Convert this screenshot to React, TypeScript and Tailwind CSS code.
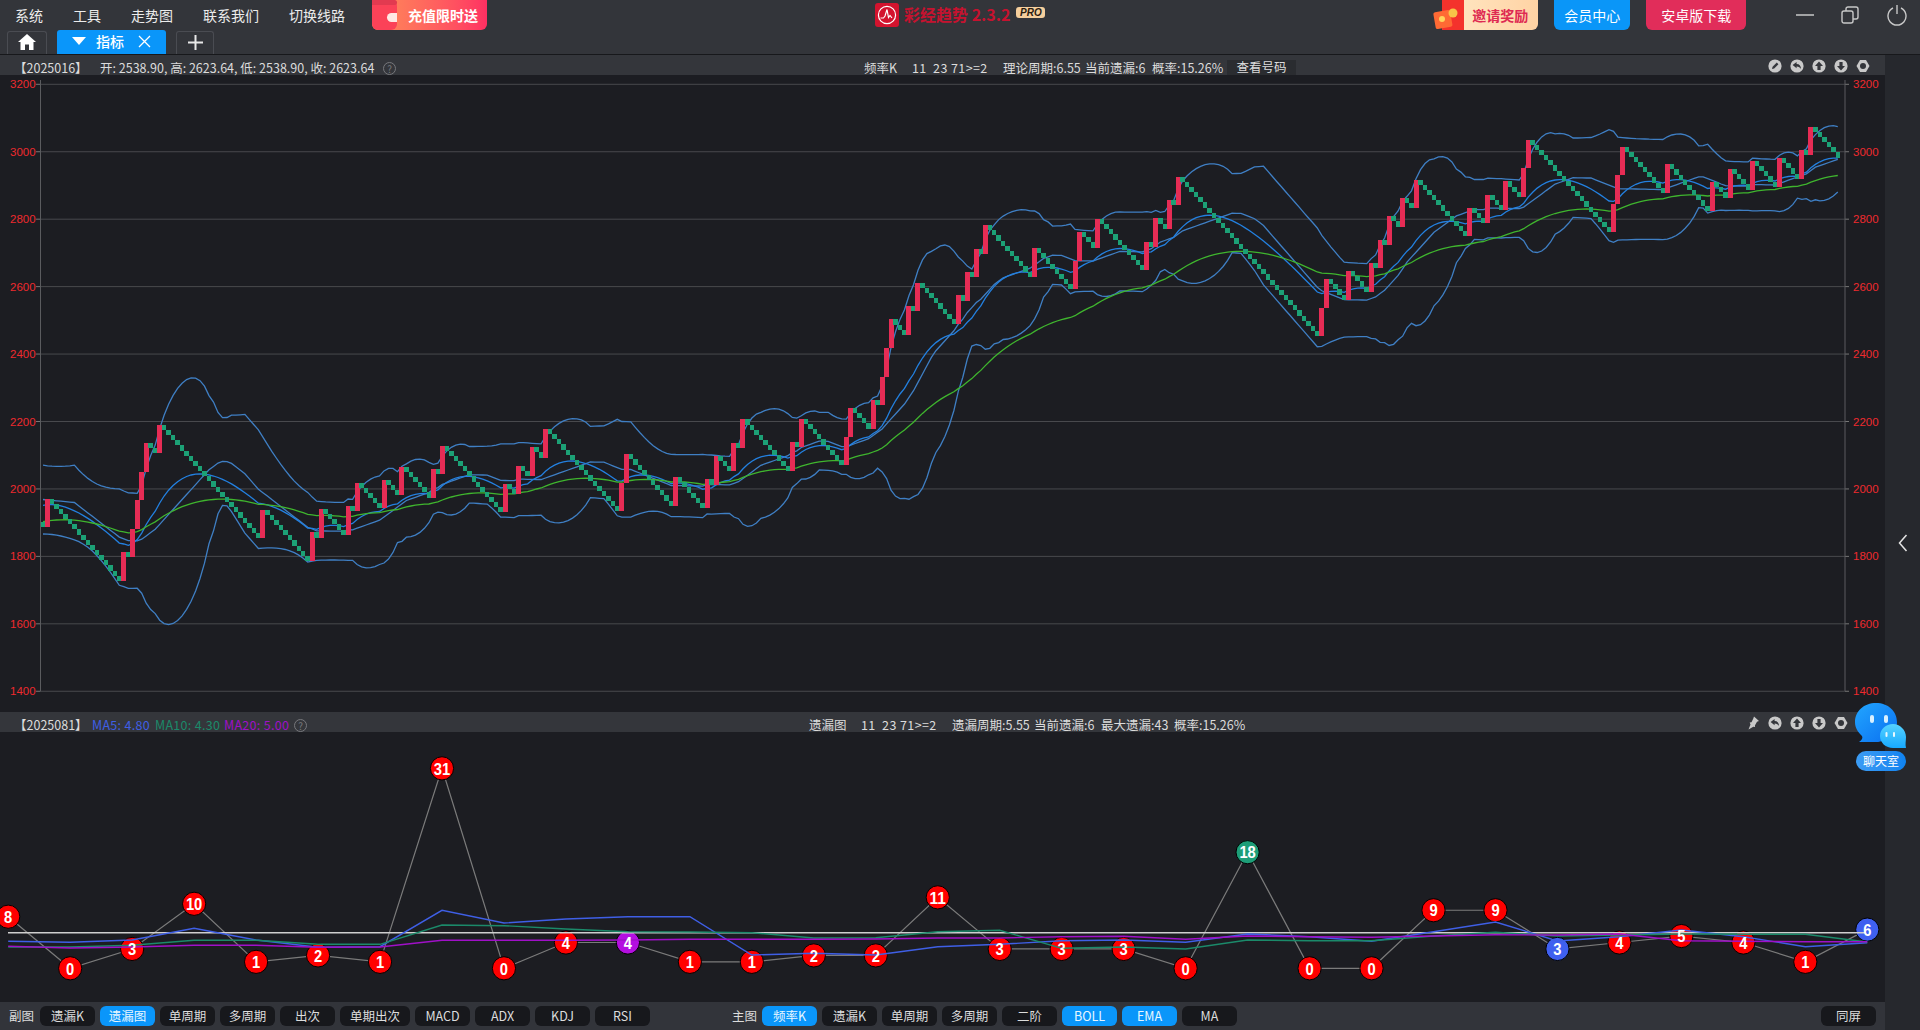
import React from "react";

const HITS = [1,18,20,21,22,23,26,49,60,62,68,70,76,80,87,89,103,106,109,112,129,130,141,148,150,154,156,167,169,179,180,185,187,188,189,193,195,204,206,208,210,221,230,231,235,246,248,251,253,285,286,291,296,298,300,303,306,318,322,326,330,331,350,351,352,362,372,376,381,387,392,394];
const hitSet = new Set(HITS);
const N = 401;
const Y = (v: number) => 84.3 + (3200 - v) * 0.3372;
const X = (i: number) => 43 + i * 4.487;
const closes: number[] = [];
const opens: number[] = [];
{
  let v = 1902;
  for (let i = 0; i < N; i++) {
    opens.push(v);
    v += hitSet.has(i) ? 84.74 : -15.26;
    closes.push(v);
  }
}
// values just before the visible window, i = -1, -2, ... -20
const BEFORE = [1902,1917,1932,1948,1963,1978,1993,2009,2024,2039,2054,2070,1905,1920,1936,1951,1966,1981,1997,2012];
const hist = (i: number) => (i < 0 ? BEFORE[-i - 1] : closes[i]);
function ma(n: number, i: number) {
  let s = 0;
  for (let k = 0; k < n; k++) s += hist(i - k);
  return s / n;
}
function sd(n: number, i: number) {
  const m = ma(n, i);
  let s = 0;
  for (let k = 0; k < n; k++) s += (hist(i - k) - m) ** 2;
  return Math.sqrt(s / n);
}
function line(f: (i: number) => number) {
  return Array.from({ length: N }, (_, i) => `${X(i).toFixed(1)},${Y(f(i)).toFixed(1)}`).join(" ");
}
const ema = (n: number, start: number) => {
  const a = 2 / (n + 1);
  const out: number[] = [];
  let e = start;
  for (let i = 0; i < N; i++) {
    e = e + a * (closes[i] - e);
    out.push(e);
  }
  return out;
};
const e1 = ema(20, 1958);
const e2 = ema(60, 1903.5);

const GRID = [3200, 3000, 2800, 2600, 2400, 2200, 2000, 1800, 1600, 1400];

function MainChart() {
  return (
    <svg viewBox="0 75 1885 637" className="block h-[637px] w-full" fontFamily="'Liberation Sans', sans-serif">
      {GRID.map((g) => (
        <g key={g}>
          <line x1={40.5} x2={1845} y1={Y(g)} y2={Y(g)} stroke="#48494d" strokeWidth={1} />
          <line x1={36} x2={40.5} y1={Y(g)} y2={Y(g)} stroke="#777" strokeWidth={1} />
          <line x1={1845} x2={1849} y1={Y(g)} y2={Y(g)} stroke="#777" strokeWidth={1} />
          <text x={10} y={Y(g) + 4} fontSize={11.5} fill="#ee2a2e">{g}</text>
          <text x={1853} y={Y(g) + 4} fontSize={11.5} fill="#ee2a2e">{g}</text>
        </g>
      ))}
      <line x1={40.5} x2={40.5} y1={80} y2={691} stroke="#5a5b5e" />
      <line x1={1845} x2={1845} y1={80} y2={691} stroke="#5a5b5e" />
      <polyline points={line((i) => ma(20, i) + 2 * sd(20, i))} fill="none" stroke="#3f7fc4" strokeWidth={1.3} />
      <polyline points={line((i) => ma(20, i) - 2 * sd(20, i))} fill="none" stroke="#3f7fc4" strokeWidth={1.3} />
      <polyline points={line((i) => ma(20, i))} fill="none" stroke="#3f7fc4" strokeWidth={1.3} />
      <polyline points={line((i) => e1[i])} fill="none" stroke="#2380e0" strokeWidth={1.3} />
      <polyline points={line((i) => e2[i])} fill="none" stroke="#3fb52e" strokeWidth={1.3} />
      {closes.map((c, i) => {
        const up = c > opens[i];
        const top = Y(Math.max(c, opens[i]));
        const h = Math.abs(Y(c) - Y(opens[i]));
        const half = up ? 2.5 : 2.245;
        const left = Math.round(X(i) - half);
        const right = Math.round(X(i) + half);
        return (
          <rect key={i} x={left} y={top} width={right - left} height={h} fill={up ? "#e62c55" : "#1ca176"} shapeRendering="crispEdges" />
        );
      })}
    </svg>
  );
}

const SUB = [8,0,3,10,1,2,1,31,0,4,4,1,1,2,2,11,3,3,3,0,18,0,0,9,9,3,4,5,4,1,6];
const SX = (i: number) => 8.2 + i * 61.97;
const SY = (v: number) => 968.3 - 6.45 * v;
const MA5 = [941.3,942.3,940,928.3,940,947.3,946.7,910.3,923,919,916.7,916.7,955,953.3,955,946.7,944.3,940.7,940,942.3,934,936.7,941.3,931.7,922,941,936.7,930,936.7,946.7,942.7];
const MA10 = [947,947,945.3,940.3,940.3,944.3,944.3,925,925.7,929,931.7,932,932.7,938,937.7,931.7,930.3,948.3,947,949,940,940.7,940.7,936,932.3,936,935,934,934.3,934.3,942];
const MA20 = [946.3,948,947,945.3,945.3,947.3,947,940.3,940.3,940.3,940,939.3,939.3,939.3,939,938,938,936.7,936.3,939.3,936,936.7,937.3,936,934.7,935,934,940.7,941.3,941.7,941.7];
const pts = (a: number[]) => a.map((y, i) => `${SX(i).toFixed(1)},${y}`).join(" ");
const nodeColor = (i: number) => (i === 20 ? "#1d9e78" : i === 10 ? "#b40fe0" : i === 25 || i === 30 ? "#3f60f0" : "#ff0000");

function SubChart() {
  return (
    <svg viewBox="0 732 1885 270" className="block h-[270px] w-full" fontFamily="'Liberation Sans', sans-serif">
      <polyline points={SUB.map((v, i) => `${SX(i).toFixed(1)},${SY(v)}`).join(" ")} fill="none" stroke="#7b7b7b" strokeWidth={1.2} />
      {SUB.map((v, i) => (
        <circle key={i} cx={SX(i)} cy={SY(v)} r={11.6} fill={nodeColor(i)} stroke="#000" strokeWidth={1} />
      ))}
      <line x1={8} x2={1865} y1={932.7} y2={932.7} stroke="#cfcfcf" strokeWidth={1.5} />
      <polyline points={pts(MA5)} fill="none" stroke="#3f5fe6" strokeWidth={1.4} />
      <polyline points={pts(MA10)} fill="none" stroke="#1b8a6a" strokeWidth={1.4} />
      <polyline points={pts(MA20)} fill="none" stroke="#a010c8" strokeWidth={1.4} />
      {SUB.map((v, i) => (
        <text key={i} x={SX(i)} y={SY(v) + 6.2} textAnchor="middle" fontSize={17} fontWeight={700} fill="#fff" textLength={String(v).length * 8.2} lengthAdjust="spacingAndGlyphs">{v}</text>
      ))}
    </svg>
  );
}

function ToolIcon({ kind }: { kind: "edit" | "back" | "up" | "down" | "gear" | "pin" }) {
  const c = "#c9c9c9";
  const d = "#34363b";
  if (kind === "pin")
    return (
      <svg width="14" height="14" viewBox="0 0 13 14">
        <path d="M7.5 0.5 L12.5 5 L10.5 5.8 L8.4 9.6 L8.6 11 L6.8 10.8 L2 13.5 L4 8.5 L3.2 6.4 L5 6.2 L6.8 2.6 Z" fill={c} />
      </svg>
    );
  if (kind === "gear")
    return (
      <svg width="14" height="14" viewBox="0 0 14 14">
        <path d="M4 1 H10 L13.5 7 L10 13 H4 L0.5 7 Z" fill={c} />
        <circle cx="7" cy="7" r="3" fill={d} />
      </svg>
    );
  return (
    <svg width="14" height="14" viewBox="0 0 14 14">
      <circle cx="7" cy="7" r="6.6" fill={c} />
      {kind === "edit" && <path d="M4 10 L4.6 7.8 L8.8 3.6 L10.4 5.2 L6.2 9.4 Z" fill={d} />}
      {kind === "back" && <path d="M2.6 6 L6.6 3 V5 C9.6 5 11 7 11 10 C10 8.2 8.8 7.4 6.6 7.4 V9.2 Z" fill={d} />}
      {kind === "up" && <path d="M7 2.6 L11 7 H8.6 V11 H5.4 V7 H3 Z" fill={d} />}
      {kind === "down" && <path d="M7 11.4 L3 7 H5.4 V3 H8.6 V7 H11 Z" fill={d} />}
    </svg>
  );
}

function Btn({ children, active, w = "w-[55px]" }: { children: React.ReactNode; active?: boolean; w?: string }) {
  return (
    <div className={`flex h-5 items-center justify-center rounded-md text-[12.5px] leading-none ${w} ${active ? "bg-[#0a96fa] text-[#e8f6ff]" : "bg-[#17181c] text-[#dcdcdc]"}`}>
      {children}
    </div>
  );
}

function Help() {
  return <span className="flex h-[13px] w-[13px] shrink-0 items-center justify-center rounded-full border border-[#77787c] text-[10px] text-[#77787c]">?</span>;
}

const FONT = "'Noto Sans CJK SC', 'Liberation Sans', sans-serif";

export default function App() {
  return (
    <div className="relative flex h-[1030px] w-[1920px] flex-col overflow-hidden bg-[#1c1d22] text-white" style={{ fontFamily: FONT }}>
      {/* Header */}
      <header className="h-[55px] shrink-0 border-b border-[#17181b] bg-[#33353a]">
        <div className="flex h-[30px] items-start">
          <nav className="flex h-[30px] items-center text-[14px] text-[#ececec]">
            <span className="ml-[15px]">系统</span>
            <span className="ml-[30px]">工具</span>
            <span className="ml-[30px]">走势图</span>
            <span className="ml-[30px]">联系我们</span>
            <span className="ml-[30px]">切换线路</span>
          </nav>
          <div className="ml-[27px] flex h-[30px] w-[115px] items-center overflow-hidden rounded-b-md bg-gradient-to-r from-[#ff8a58] to-[#ff2f62]">
            <div className="relative h-full w-[25px] rounded-r-md bg-[#fb4258]">
              <div className="absolute inset-x-0 top-0 h-[5px] rounded-r-md bg-[#e23a50]" />
              <div className="absolute right-0 top-[13px] h-[9px] w-[10px] rounded-l-full bg-[#ffe9e4]" />
            </div>
            <span className="ml-[11px] text-[14px] font-bold text-white">充值限时送</span>
          </div>
          <div className="ml-[388px] flex h-[30px] items-start">
            <div className="mt-[3px] flex h-6 w-6 items-center justify-center rounded-[3px] bg-[#d3132e]">
              <svg width="20" height="20" viewBox="0 0 20 20" fill="none" stroke="#fff" strokeWidth="1.2">
                <circle cx="10" cy="10" r="8.6" />
                <path d="M3.5 13 L6.5 13 L8 11 L10 4.5 L11.5 12.5 L13 10.5 L15 13" />
              </svg>
            </div>
            <span className="ml-[5px] mt-[2px] text-[16px] font-bold leading-[24px] text-[#c6122f]">彩经趋势 2.3.2</span>
            <span className="ml-[6px] mt-[7px] flex h-[11px] w-[29px] items-center justify-center rounded-[3px] bg-[#f6cf9d] text-[10px] font-bold italic leading-none text-[#2b1c10]" style={{ fontFamily: "'Liberation Sans', sans-serif" }}>PRO</span>
          </div>
          <div className="ml-[388px] flex h-[30px] w-[105px] items-stretch">
            <svg width="31" height="30" viewBox="0 0 31 30" className="shrink-0">
              <path d="M9 0 H31 V30 H9 Z" fill="#f4322c" />
              <rect x="1.5" y="11" width="17" height="17" rx="2" transform="rotate(-10 10 20)" fill="#ff6a34" />
              <circle cx="20" cy="13" r="4.5" fill="#f7c548" />
              <circle cx="9" cy="19" r="3" fill="#ffd55c" />
            </svg>
            <div className="flex flex-1 items-center rounded-br-md bg-gradient-to-r from-[#ffe3bd] to-[#ffd3a4]">
              <span className="ml-[8px] text-[14px] font-bold text-[#de2a52]">邀请奖励</span>
            </div>
          </div>
          <div className="ml-[16px] flex h-[30px] w-[76px] items-center justify-center rounded-b-md bg-[#0a96f8] text-[14px] text-white">会员中心</div>
          <div className="ml-[16px] flex h-[30px] w-[100px] items-center justify-center rounded-b-md bg-[#e12d5a] text-[14px] text-white">安卓版下载</div>
          <svg width="18" height="30" viewBox="0 0 18 30" className="ml-[50px]"><line x1="0" x2="18" y1="15" y2="15" stroke="#c8c8c8" strokeWidth="1.5" /></svg>
          <svg width="18" height="18" viewBox="0 0 18 18" fill="none" stroke="#c8c8c8" strokeWidth="1.4" className="ml-[27px] mt-[6px]">
            <rect x="1" y="5" width="11" height="12" rx="2" />
            <path d="M5 5 V3 a2 2 0 0 1 2-2 H15 a2 2 0 0 1 2 2 V11 a2 2 0 0 1-2 2 H12" />
          </svg>
          <svg width="20" height="22" viewBox="0 0 20 22" fill="none" stroke="#c8c8c8" strokeWidth="1.4" className="ml-[28px] mt-[4px]">
            <path d="M6 4 A9 9 0 1 0 14 4" />
            <line x1="10" x2="10" y1="1" y2="10" />
          </svg>
        </div>
        <div className="flex h-[24px] items-end">
          <div className="ml-[7px] flex h-[23px] w-[40px] items-center justify-center rounded-t-[3px] border border-b-0 border-[#4a4c52] pb-[2px]">
            <svg width="18" height="16" viewBox="0 0 18 16" fill="#fff"><path d="M9 0 L18 8 H15.5 V16 H11 V10.5 H7 V16 H2.5 V8 H0 Z" /></svg>
          </div>
          <div className="ml-[10px] flex h-[24px] w-[109px] items-center rounded-t-[3px] bg-[#0a96fa] pb-[2px] text-[14px] text-white">
            <svg width="14" height="8" viewBox="0 0 14 8" className="ml-[15px]" fill="#fff"><path d="M0 0 H14 L7 8 Z" /></svg>
            <span className="ml-[10px] font-medium">指标</span>
            <svg width="13" height="13" viewBox="0 0 13 13" className="ml-[14px]" stroke="#fff" strokeWidth="1.3"><path d="M1 1 L12 12 M12 1 L1 12" /></svg>
          </div>
          <div className="ml-[10px] flex h-[23px] w-[38px] items-center justify-center rounded-t-[3px] border border-b-0 border-[#4a4c52] pb-[2px]">
            <svg width="15" height="15" viewBox="0 0 15 15" stroke="#e8e8e8" strokeWidth="2"><path d="M7.5 0 V15 M0 7.5 H15" /></svg>
          </div>
        </div>
      </header>

      <div className="flex min-h-0 flex-1">
        <main className="flex w-[1885px] shrink-0 flex-col">
          <div className="relative flex h-5 shrink-0 items-center bg-[#34363b] pl-[14px] pt-[7px] text-[12.5px] leading-none text-[#dcdcdc]">
            <span className="w-[86px] whitespace-pre">【2025016】</span>
            <span className="w-[283px] whitespace-pre">开: 2538.90, 高: 2623.64, 低: 2538.90, 收: 2623.64</span>
            <Help />
            <span className="ml-[468px] w-[48px] whitespace-pre">频率K</span>
            <span className="w-[91px] whitespace-pre tracking-[0.4px]">11  23 71&gt;=2</span>
            <span className="w-[82px] whitespace-pre">理论周期:6.55</span>
            <span className="w-[67px] whitespace-pre">当前遗漏:6</span>
            <span className="w-[75px] whitespace-pre">概率:15.26%</span>
            <span className="flex h-[15px] w-[69px] items-center justify-center self-end bg-[#2a2c30] text-[12.5px]">查看号码</span>
            <div className="absolute left-[1768px] top-[4px] flex gap-[8px]">
              <ToolIcon kind="edit" />
              <ToolIcon kind="back" />
              <ToolIcon kind="up" />
              <ToolIcon kind="down" />
              <ToolIcon kind="gear" />
            </div>
          </div>
          <MainChart />
          <div className="relative flex h-5 shrink-0 items-center bg-[#34363b] pl-[14px] pt-[7px] text-[12.5px] leading-none text-[#dcdcdc]">
            <span className="w-[78px] whitespace-pre">【2025081】</span>
            <span className="w-[63px] whitespace-pre tracking-[0.3px] text-[#3f5fe6]">MA5: 4.80</span>
            <span className="w-[69px] whitespace-pre tracking-[0.3px] text-[#1b8a6a]">MA10: 4.30</span>
            <span className="w-[70px] whitespace-pre tracking-[0.3px] text-[#a010c8]">MA20: 5.00</span>
            <Help />
            <span className="ml-[502px] w-[52px] whitespace-pre">遗漏图</span>
            <span className="w-[91px] whitespace-pre tracking-[0.4px]">11  23 71&gt;=2</span>
            <span className="w-[82px] whitespace-pre">遗漏周期:5.55</span>
            <span className="w-[67px] whitespace-pre">当前遗漏:6</span>
            <span className="w-[73px] whitespace-pre">最大遗漏:43</span>
            <span className="whitespace-pre">概率:15.26%</span>
            <div className="absolute left-[1746px] top-[4px] flex gap-[8px]">
              <ToolIcon kind="pin" />
              <ToolIcon kind="back" />
              <ToolIcon kind="up" />
              <ToolIcon kind="down" />
              <ToolIcon kind="gear" />
            </div>
          </div>
          <SubChart />
          <div className="flex h-[28px] shrink-0 items-center bg-[#32343a] text-[12.5px] text-[#dcdcdc]">
            <span className="ml-[9px] w-[31px]">副图</span>
            <div className="flex gap-[5px]">
              <Btn>遗漏K</Btn>
              <Btn active>遗漏图</Btn>
              <Btn>单周期</Btn>
              <Btn>多周期</Btn>
              <Btn>出次</Btn>
              <Btn w="w-[70px]">单期出次</Btn>
              <Btn>MACD</Btn>
              <Btn>ADX</Btn>
              <Btn>KDJ</Btn>
              <Btn>RSI</Btn>
            </div>
            <span className="ml-[82px] w-[30px]">主图</span>
            <div className="flex gap-[5px]">
              <Btn active>频率K</Btn>
              <Btn>遗漏K</Btn>
              <Btn>单周期</Btn>
              <Btn>多周期</Btn>
              <Btn>二阶</Btn>
              <Btn active>BOLL</Btn>
              <Btn active>EMA</Btn>
              <Btn>MA</Btn>
            </div>
            <div className="ml-auto mr-[9px]">
              <Btn>同屏</Btn>
            </div>
          </div>
        </main>
        <aside className="flex flex-1 items-center justify-center bg-[#26282d]">
          <svg width="10" height="18" viewBox="0 0 10 18" fill="none" stroke="#e4e4e4" strokeWidth="1.5"><path d="M8.5 1 L1.5 9 L8.5 17" /></svg>
        </aside>
      </div>

      {/* Chat floating widget */}
      <div className="absolute left-[1855px] top-[703px] flex w-[52px] flex-col items-center">
        <svg width="52" height="46" viewBox="0 0 52 46">
          <defs>
            <linearGradient id="a" x1="0" x2="1" y1="0" y2="1"><stop offset="0" stopColor="#22a6ff" /><stop offset="1" stopColor="#0a6ff0" /></linearGradient>
            <linearGradient id="b" x1="0" x2="0" y1="0" y2="1"><stop offset="0" stopColor="#56d2ff" /><stop offset="1" stopColor="#18aaff" /></linearGradient>
          </defs>
          <path d="M21 0 C33 0 42 8 42 19 C42 30 33 39 21 39 H4 C7 37 8 35 7 33 C3 29 0 25 0 19 C0 8 9 0 21 0 Z" fill="url(#a)" />
          <rect x="15" y="12" width="4" height="8" rx="2" fill="#d8f0ff" />
          <rect x="29" y="12" width="4" height="8" rx="2" fill="#d8f0ff" />
          <path d="M38 21 C45 21 51 27 51 34 C51 38 50 41 51 45 H38 C31 45 25 40 25 33 C25 26 31 21 38 21 Z" fill="url(#b)" />
          <rect x="30.5" y="29" width="2" height="5" rx="1" fill="#e8f8ff" />
          <rect x="38" y="29" width="2" height="5" rx="1" fill="#e8f8ff" />
        </svg>
        <div className="mt-[2px] flex h-5 w-[50px] items-center justify-center rounded-full bg-gradient-to-r from-[#3c9cf4] to-[#0e83f0] text-[12px] leading-none text-white">聊天室</div>
      </div>
    </div>
  );
}
